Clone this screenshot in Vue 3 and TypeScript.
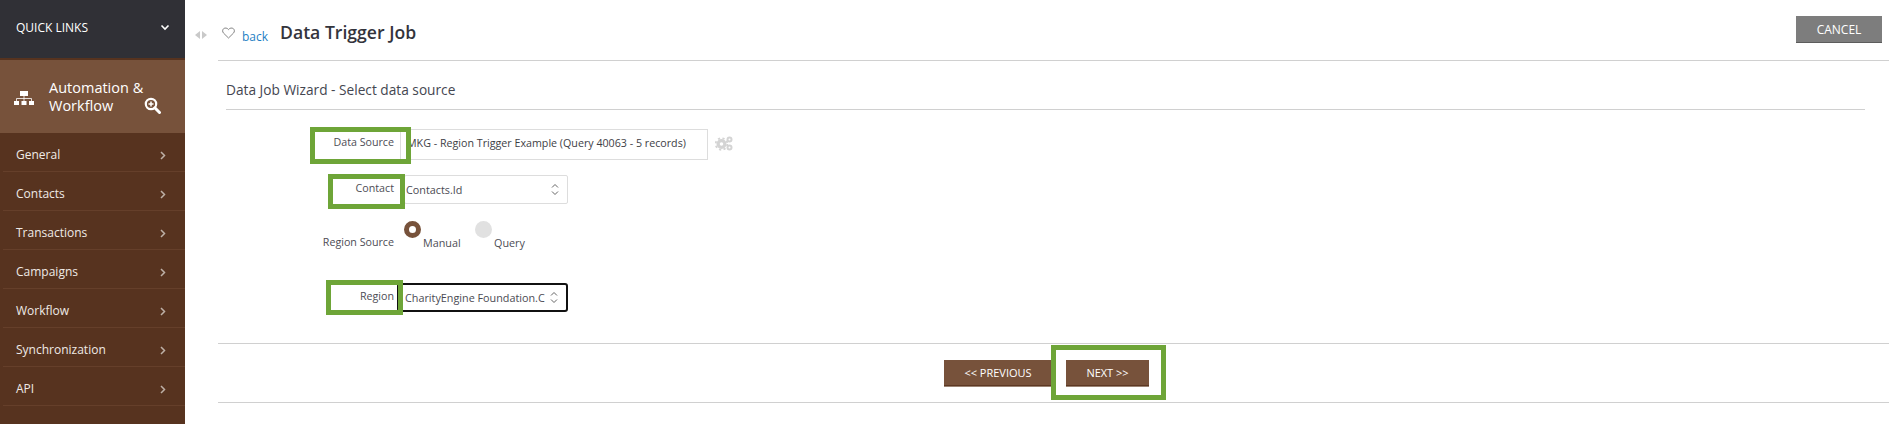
<template>
  <div class="page">
    <aside class="sidebar">
      <div class="quick-links">
        <span>QUICK LINKS</span>
        <svg class="quick-chevron" width="10" height="7" viewBox="0 0 10 7"><path d="M1.5 1.5 5 5l3.5-3.5" fill="none" stroke="#fff" stroke-width="1.6" /></svg>
      </div>
      <div class="module">
        <svg class="module-icon" width="20" height="15" viewBox="0 0 20 15">
          <rect x="6" y="0" width="8" height="5" fill="#fff" />
          <path d="M2.5 10V7.5h15V10M10 5v5" fill="none" stroke="#fff" stroke-width="0.8" />
          <rect x="0" y="10" width="5" height="4" fill="#fff" />
          <rect x="7.5" y="10" width="5" height="4" fill="#fff" />
          <rect x="15" y="10" width="5" height="4" fill="#fff" />
        </svg>
        <div class="module-title">Automation &amp;<br />Workflow</div>
        <svg class="module-zoom" width="17" height="17" viewBox="0 0 17 17">
          <circle cx="7" cy="7" r="5.2" fill="none" stroke="#fff" stroke-width="2.2" />
          <path d="M10.8 10.8 15.5 15.5" stroke="#fff" stroke-width="3" stroke-linecap="round" />
          <path d="M4.5 7h5M7 4.5v5" stroke="#fff" stroke-width="1.5" />
        </svg>
      </div>
      <ul class="menu">
        <li v-for="item in menuItems" :key="item">
          <span>{{ item }}</span>
          <svg width="6" height="9" viewBox="0 0 6 9"><path d="M1 1l3.5 3.5L1 8" fill="none" stroke="#bdb0a6" stroke-width="1.5" /></svg>
        </li>
      </ul>
    </aside>

    <main class="content">
      <div class="collapse-arrows">
        <i class="arrow-left"></i>
        <i class="arrow-right"></i>
      </div>
      <div class="body">
        <header class="topbar">
          <svg class="heart" width="13" height="12" viewBox="0 0 13 12"><path d="M6.5 11 1.6 6.2C.2 4.7.4 2.8 1.6 1.7 3 .6 5.2.8 6.5 2.6 7.8.8 10 .6 11.4 1.7c1.2 1.1 1.4 3 0 4.5Z" fill="none" stroke="#777" stroke-width="0.9" /></svg>
          <a class="back">back</a>
          <h1>Data Trigger Job</h1>
          <button class="cancel">CANCEL</button>
        </header>

        <h2>Data Job Wizard - Select data source</h2>

        <form class="form" @submit.prevent>
          <div class="row row-source">
            <label class="field-label">Data Source<span class="mark mark-source"></span></label>
            <div class="input">MKG - Region Trigger Example (Query 40063 - 5 records)</div>
            <svg class="gears" width="18" height="15" viewBox="0 0 18 15">
              <circle cx="6.5" cy="8" r="3.4" fill="none" stroke="#d4d4d4" stroke-width="3.2" />
              <circle cx="6.5" cy="8" r="5.8" fill="none" stroke="#d4d4d4" stroke-width="1.8" stroke-dasharray="2.2 2.4" />
              <circle cx="14.5" cy="3.5" r="2" fill="none" stroke="#d4d4d4" stroke-width="2" />
              <circle cx="14.5" cy="11.5" r="2" fill="none" stroke="#d4d4d4" stroke-width="2" />
            </svg>
          </div>

          <div class="row row-contact">
            <label class="field-label">Contact<span class="mark mark-contact"></span></label>
            <div class="select">
              <span>Contacts.Id</span>
              <svg width="8" height="13" viewBox="0 0 8 13"><path d="M1 4.5 4 1.5l3 3M1 8.5l3 3 3-3" fill="none" stroke="#666" stroke-width="1" /></svg>
            </div>
          </div>

          <div class="row row-radio">
            <label class="field-label">Region Source</label>
            <div class="radio-group">
              <span class="radio radio-on"></span><span class="radio-text">Manual</span>
              <span class="radio"></span><span class="radio-text">Query</span>
            </div>
          </div>

          <div class="row row-region">
            <label class="field-label">Region<span class="mark mark-region"></span></label>
            <div class="select select-focus">
              <span>CharityEngine Foundation.C</span>
              <svg width="8" height="13" viewBox="0 0 8 13"><path d="M1 4.5 4 1.5l3 3M1 8.5l3 3 3-3" fill="none" stroke="#666" stroke-width="1" /></svg>
            </div>
          </div>
        </form>

        <footer class="actions">
          <button class="btn">&lt;&lt; PREVIOUS</button>
          <button class="btn btn-next">NEXT &gt;&gt;<span class="mark mark-next"></span></button>
        </footer>
      </div>
    </main>
  </div>
</template>

<script setup lang="ts">
const menuItems: string[] = [
  'General',
  'Contacts',
  'Transactions',
  'Campaigns',
  'Workflow',
  'Synchronization',
  'API',
];
</script>

<style>
html,
body {
  margin: 0;
  background: #fff;
  overflow: hidden;
}
</style>

<style scoped>
.page {
  display: flex;
  width: 1889px;
  height: 424px;
  overflow: hidden;
  font-family: "Open Sans", "Liberation Sans", sans-serif;
  font-size: 12px;
  color: #444;
}

.sidebar {
  width: 185px;
  flex-shrink: 0;
  background: #57331f;
}

.quick-links {
  height: 58px;
  box-sizing: border-box;
  padding: 0 15px 4px 16px;
  display: flex;
  align-items: center;
  justify-content: space-between;
  background: #303036;
  color: #fff;
}

.module {
  height: 73px;
  margin-top: 2px;
  box-sizing: border-box;
  padding: 0 24px 0 14px;
  display: flex;
  align-items: center;
  background: #77523b;
  color: #fff;
}

.module-icon {
  flex-shrink: 0;
  margin-top: 3px;
}

.module-title {
  width: 99px;
  margin-left: 15px;
  font-size: 14.5px;
  line-height: 18px;
}

.module-zoom {
  margin-top: 17px;
  flex-shrink: 0;
}

.menu {
  list-style: none;
  margin: 0;
  padding: 0;
}

.menu li {
  height: 39px;
  box-sizing: border-box;
  margin-left: 3px;
  padding: 4px 19px 0 13px;
  display: flex;
  align-items: center;
  justify-content: space-between;
  border-bottom: 1px solid #653f2a;
  color: #efeae6;
}

.menu svg {
  margin-top: 2px;
}

.content {
  flex: 1;
  display: flex;
  min-width: 0;
}

.collapse-arrows {
  width: 33px;
  flex-shrink: 0;
  box-sizing: border-box;
  padding: 31px 0 0 10px;
  display: flex;
  align-items: flex-start;
  gap: 2px;
}

.arrow-left,
.arrow-right {
  width: 0;
  height: 0;
  border-top: 4.5px solid transparent;
  border-bottom: 4.5px solid transparent;
}

.arrow-left {
  border-right: 5px solid #c9c9c9;
}

.arrow-right {
  border-left: 5px solid #c9c9c9;
}

.body {
  flex: 1;
  min-width: 0;
}

.topbar {
  height: 61px;
  box-sizing: border-box;
  padding: 0 7px 0 4px;
  display: flex;
  align-items: center;
  border-bottom: 1px solid #d0d0d0;
}

.heart {
  margin-top: 6px;
}

.back {
  margin: 13px 0 0 7px;
  color: #1f7fc4;
  font-size: 12px;
}

h1 {
  margin: 4px 0 0 12px;
  font-size: 17.6px;
  font-weight: 600;
  color: #33343c;
}

.cancel {
  margin-left: auto;
  width: 86px;
  height: 26px;
  margin-bottom: 2px;
  padding: 0;
  border: 0;
  background: #7d7d7d;
  box-shadow: 0 1px 0 #5c5c5c;
  color: #fff;
  font: inherit;
}

h2 {
  margin: 0 24px 0 8px;
  height: 49px;
  box-sizing: border-box;
  padding-top: 20px;
  font-size: 13.7px;
  font-weight: 400;
  line-height: 18px;
  color: #444650;
  border-bottom: 1px solid #d0d0d0;
}

.form {
  height: 234px;
  box-sizing: border-box;
  padding-top: 19px;
  border-bottom: 1px solid #d0d0d0;
}

.row {
  display: flex;
  align-items: center;
}

.field-label {
  position: relative;
  width: 176px;
  flex-shrink: 0;
  text-align: right;
  font-size: 10.7px;
  color: #4d4d55;
}

.mark {
  position: absolute;
  box-sizing: border-box;
  border: 5px solid #6ea538;
  pointer-events: none;
  z-index: 2;
}

.row-source {
  height: 31px;
}

.row-source .field-label {
  margin-top: -5px;
}

.mark-source {
  left: 92px;
  top: -8px;
  width: 101px;
  height: 37px;
}

.input,
.select {
  box-sizing: border-box;
  border: 1px solid #ddd;
  background: #fff;
  font-size: 10.8px;
  color: #4a4a52;
  white-space: nowrap;
}

.input {
  width: 308px;
  height: 31px;
  margin-left: 6px;
  padding: 0 0 0 6px;
  line-height: 27px;
  font-size: 10.7px;
  color: #3e3e46;
}

.gears {
  margin: -3px 0 0 7px;
}

.row-contact {
  margin-top: 15px;
  height: 29px;
}

.row-contact .field-label {
  margin-top: -4px;
}

.mark-contact {
  left: 110px;
  top: -7px;
  width: 77px;
  height: 35px;
}

.select {
  width: 164px;
  height: 29px;
  margin-left: 10px;
  padding: 0 8px 0 1px;
  display: flex;
  align-items: center;
  justify-content: space-between;
  border-radius: 2px;
}

.row-radio {
  margin-top: 17px;
  height: 32px;
}

.row-radio .field-label {
  margin-top: 10px;
}

.radio-group {
  display: flex;
  align-items: center;
  margin-left: 10px;
}

.radio {
  width: 17px;
  height: 17px;
  box-sizing: border-box;
  border-radius: 50%;
  background: #e1e1e1;
  flex-shrink: 0;
  margin-top: -15px;
}

.radio-on {
  background: #fff;
  border: 5px solid #77523b;
}

.radio-text {
  font-size: 10.8px;
  color: #4d4d55;
  margin: 10px 0 0 2px;
  width: 52px;
}

.row-region {
  margin-top: 30px;
  height: 29px;
}

.row-region .field-label {
  margin-top: -3px;
}

.mark-region {
  left: 108px;
  top: -9px;
  width: 77px;
  height: 35px;
}

.select-focus {
  width: 171px;
  margin-left: 3px;
  padding-left: 6px;
  border: 2px solid #111;
  border-radius: 3px;
}

.actions {
  height: 59px;
  box-sizing: border-box;
  padding: 16px 0 0 726px;
  display: flex;
  align-items: flex-start;
  gap: 14px;
  border-bottom: 1px solid #d0d0d0;
}

.btn {
  position: relative;
  height: 26px;
  padding: 0;
  width: 108px;
  border: 0;
  border-bottom: 1px solid #5d3823;
  background: #77523b;
  box-shadow: 0 1px 0 #9b8474;
  color: #fff;
  font: inherit;
  font-size: 11px;
}

.btn-next {
  width: 83px;
}

.mark-next {
  left: -15px;
  top: -15px;
  width: 115px;
  height: 55px;
}
</style>
